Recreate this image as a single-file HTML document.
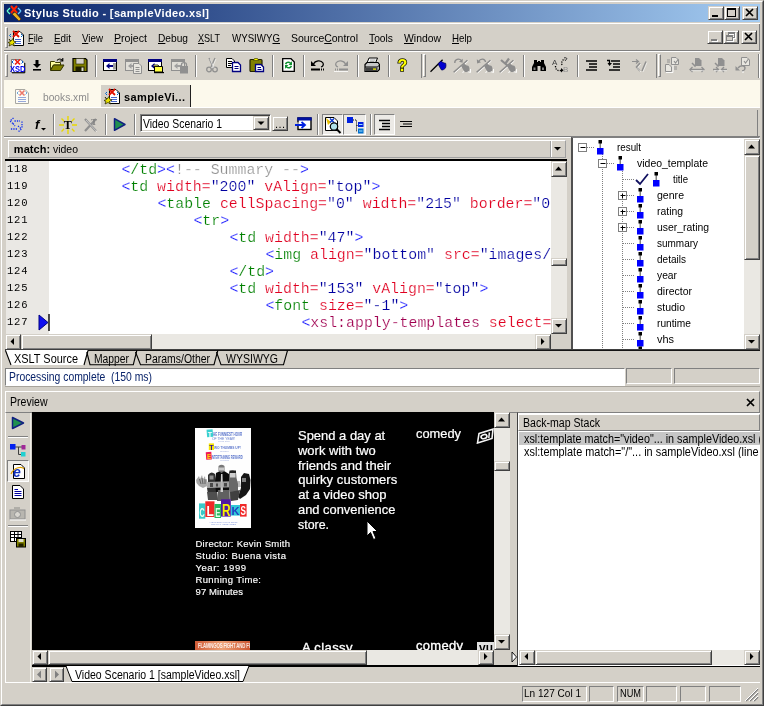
<!DOCTYPE html>
<html lang="en"><head><meta charset="utf-8"><title>Stylus Studio - [sampleVideo.xsl]</title>
<style>
html,body{margin:0;padding:0}
body{width:764px;height:706px;overflow:hidden;position:relative;background:#d4d0c8;font-family:"Liberation Sans",sans-serif;font-size:11px;color:#000}
div,svg{position:absolute;box-sizing:border-box}
#w{left:0;top:0;width:764px;height:706px;will-change:transform}
.t{white-space:pre}
.rs{border:1px solid;border-color:#fff #808080 #808080 #fff}
.sk{border:1px solid;border-color:#808080 #fff #fff #808080}
.bt{background:#d4d0c8;border:1px solid;border-color:#d4d0c8 #404040 #404040 #d4d0c8;box-shadow:inset 1px 1px 0 #fff,inset -1px -1px 0 #808080}
.tr{background:#eae8e3}
u{text-decoration:underline;text-underline-offset:1px}
.ed{overflow:hidden}
.cl{font:14.88px/17px "Liberation Mono",monospace;-webkit-text-stroke:.22px #fff;white-space:pre;height:17px}
.ln{left:1px;font:10.500px/17px "Liberation Mono",monospace;letter-spacing:.8px;white-space:pre;height:17px}
.b{color:#0000ff}.g{color:#008000}.r{color:#e00020}.v{color:#0000a0}.c{color:#909090}.m{color:#a00050}

</style></head>
<body>
<div id="w">
<div style="left:0px;top:0px;width:764px;height:706px;border:1px solid;border-color:#d4d0c8 #404040 #404040 #d4d0c8;"></div>
<div style="left:1px;top:1px;width:762px;height:704px;border:1px solid;border-color:#fff #808080 #808080 #fff;"></div>
<div style="left:4px;top:4px;width:756px;height:18px;background:linear-gradient(90deg,#0a246a,#a4ccf2);"></div>
<svg style="left:6px;top:5px;" width="16" height="16" viewBox="0 0 16 16"><path d="M1 6 L4 3 M1 6 L4 9" stroke="#6fc" stroke-width="1.3" fill="none"/><path d="M15 6 L12 3 M15 6 L12 9" stroke="#6cf" stroke-width="1.3" fill="none"/><path d="M5 1 L11 8 M11 1 L5 8" stroke="#f20" stroke-width="2"/><path d="M6 9 L9 7 L15 14 L13 16 Z" fill="#e8b020" stroke="#402000" stroke-width=".6"/></svg>
<div class="t" style="left:24px;top:5.69px;font-size:11px;line-height:14px;font-weight:700;color:#fff;letter-spacing:0.363px;">Stylus Studio - [sampleVideo.xsl]</div>
<div class="bt" style="left:708px;top:6px;width:16px;height:14px;"><svg width="14" height="12" viewBox="0 0 14 12" style="left:0;top:0"><rect x="3" y="8" width="6" height="2" fill="#000"/></svg></div>
<div class="bt" style="left:724px;top:6px;width:16px;height:14px;"><svg width="14" height="12" viewBox="0 0 14 12" style="left:0;top:0"><g><rect x="2.500" y="1.500" width="8" height="8" fill="none" stroke="#000"/><rect x="2" y="1" width="9" height="2" fill="#000"/></g></svg></div>
<div class="bt" style="left:742px;top:6px;width:16px;height:14px;"><svg width="14" height="12" viewBox="0 0 14 12" style="left:0;top:0"><path d="M3 2 L10 9 M10 2 L3 9" stroke="#000" stroke-width="1.700"/></svg></div>
<div style="left:4px;top:23px;width:756px;height:1px;background:#fff;"></div>
<div style="left:4px;top:50px;width:756px;height:1px;background:#808080;"></div>
<div style="left:759px;top:24px;width:1px;height:26px;background:#808080;"></div>
<div style="left:4px;top:51px;width:756px;height:1px;background:#fff;"></div>
<div style="left:5px;top:27px;width:3px;height:21px;border:1px solid;border-color:#fff #808080 #808080 #fff;"></div>
<svg style="left:8px;top:30px;" width="17" height="17" viewBox="0 0 17 17"><path d="M5.5 1.5 H12 L15.5 5 V15.5 H5.5 Z" fill="#fff" stroke="#000" stroke-width="1"/><path d="M7 9.5 H13 M7 11.5 H13 M7 13.5 H13" stroke="#4466cc" stroke-width="1"/><path d="M5 1 L11 7 M11 1 L5 7" stroke="#e01000" stroke-width="1.8"/><path d="M3 4 L1.5 5.5 L3 7" stroke="#06c" fill="none"/><path d="M13 4 L14.5 5.5 L13 7" stroke="#06c" fill="none"/><path d="M1 9 L3 11 L5 8.5 L6 11.5 L8 12 L5.5 13.5 L6.5 16 L4 14.5 L1 16 L2 13.5 L0 12.5 L2.5 11.5 Z" fill="#e8e000" stroke="#202000" stroke-width=".7"/></svg>
<div class="t" style="left:28px;top:31.19px;font-size:11px;line-height:14px;transform:scaleX(0.8462);transform-origin:0 0;"><u>F</u>ile</div>
<div class="t" style="left:54px;top:31.19px;font-size:11px;line-height:14px;transform:scaleX(0.8968);transform-origin:0 0;"><u>E</u>dit</div>
<div class="t" style="left:82px;top:31.19px;font-size:11px;line-height:14px;transform:scaleX(0.8881);transform-origin:0 0;"><u>V</u>iew</div>
<div class="t" style="left:114px;top:31.19px;font-size:11px;line-height:14px;transform:scaleX(0.9639);transform-origin:0 0;"><u>P</u>roject</div>
<div class="t" style="left:158px;top:31.19px;font-size:11px;line-height:14px;transform:scaleX(0.9255);transform-origin:0 0;"><u>D</u>ebug</div>
<div class="t" style="left:198px;top:31.19px;font-size:11px;line-height:14px;transform:scaleX(0.8241);transform-origin:0 0;"><u>X</u>SLT</div>
<div class="t" style="left:232px;top:31.19px;font-size:11px;line-height:14px;transform:scaleX(0.8825);transform-origin:0 0;">WYSIWY<u>G</u></div>
<div class="t" style="left:291px;top:31.19px;font-size:11px;line-height:14px;transform:scaleX(0.9528);transform-origin:0 0;">Source<u>C</u>ontrol</div>
<div class="t" style="left:369px;top:31.19px;font-size:11px;line-height:14px;transform:scaleX(0.9346);transform-origin:0 0;"><u>T</u>ools</div>
<div class="t" style="left:404px;top:31.19px;font-size:11px;line-height:14px;transform:scaleX(0.9457);transform-origin:0 0;"><u>W</u>indow</div>
<div class="t" style="left:452px;top:31.19px;font-size:11px;line-height:14px;transform:scaleX(0.8840);transform-origin:0 0;"><u>H</u>elp</div>
<div class="bt" style="left:707px;top:30px;width:16px;height:14px;"><svg width="14" height="12" viewBox="0 0 14 12" style="left:0;top:0"><rect x="3" y="8" width="6" height="2" fill="#fff" transform="translate(1,1)"/><rect x="3" y="8" width="6" height="2" fill="#808080"/></svg></div>
<div class="bt" style="left:723px;top:30px;width:16px;height:14px;"><svg width="14" height="12" viewBox="0 0 14 12" style="left:0;top:0"><g transform="translate(1,1)"><rect x="4.500" y="1.500" width="6" height="5" fill="none" stroke="#fff"/><rect x="4" y="1" width="7" height="2" fill="#fff"/><rect x="2.500" y="4.500" width="6" height="5" fill="#d4d0c8" stroke="#fff"/><rect x="2" y="4" width="7" height="2" fill="#fff"/></g><g><rect x="4.500" y="1.500" width="6" height="5" fill="none" stroke="#808080"/><rect x="4" y="1" width="7" height="2" fill="#808080"/><rect x="2.500" y="4.500" width="6" height="5" fill="#d4d0c8" stroke="#808080"/><rect x="2" y="4" width="7" height="2" fill="#808080"/></g></svg></div>
<div class="bt" style="left:741px;top:30px;width:16px;height:14px;"><svg width="14" height="12" viewBox="0 0 14 12" style="left:0;top:0"><path d="M3 2 L10 9 M10 2 L3 9" stroke="#000" stroke-width="1.700"/></svg></div>
<div style="left:5px;top:54px;width:3px;height:23px;border:1px solid;border-color:#fff #808080 #808080 #fff;"></div>
<svg style="left:10px;top:58px;" width="16" height="16" viewBox="0 0 16 16"><path d="M1.500 1.500 H11 L14.500 5 V14.500 H1.500 Z" fill="#fff" stroke="#606060" stroke-width=".8"/><path d="M14.800 5 V14.800 H2" fill="none" stroke="#000" stroke-width="1"/>
<path d="M5 1.500 L10 6.500 M10 1.500 L5 6.500" stroke="#f02010" stroke-width="1.700"/>
<path d="M3.500 2.500 L2 4 L3.500 5.500" stroke="#0060d0" fill="none"/><path d="M11.500 2.500 L13 4 L11.500 5.500" stroke="#0060d0" fill="none"/>
<text x="0" y="13.500" font-family="Liberation Sans,sans-serif" font-weight="700" font-size="8.500" fill="#0000f0" textLength="15.500" lengthAdjust="spacingAndGlyphs">XSD</text></svg>
<svg style="left:32px;top:58px;" width="10" height="16" viewBox="0 0 10 16"><path d="M3.5 2 H6.5 V6 H9 L5 10 L1 6 H3.5 Z" fill="#000"/><rect x="1" y="11" width="8" height="1.6" fill="#000"/></svg>
<svg style="left:49px;top:57px;" width="16" height="16" viewBox="0 0 16 16"><path d="M1.5 4.5 H5.5 L6.5 5.5 H11.5 V8 H4.5 L1.5 13 Z" fill="#ffffa0" stroke="#404000" stroke-width="1"/>
<path d="M4.5 8 H15 L11.5 13.5 H1.5 Z" fill="#808000" stroke="#303000" stroke-width="1"/>
<path d="M8 3.5 C9.5 1.5 12 1.5 13.5 3.5 M13.8 1 V4 H10.8" fill="none" stroke="#000" stroke-width="1.1"/></svg>
<svg style="left:72px;top:57px;" width="16" height="16" viewBox="0 0 16 16"><path d="M1 1.5 H13.5 L15 3 V14.5 H1 Z" fill="#808000" stroke="#000" stroke-width="1.2"/><rect x="4" y="1.5" width="8" height="5.5" fill="#d4d0c8" stroke="#202000" stroke-width=".6"/><rect x="3.5" y="9.5" width="9" height="5" fill="#202000"/><rect x="9.5" y="10.5" width="2" height="3.5" fill="#e0e0d0"/></svg>
<div style="left:95px;top:55px;width:1px;height:22px;background:#808080;"></div>
<div style="left:96px;top:55px;width:1px;height:22px;background:#fff;"></div>
<svg style="left:102px;top:58px;" width="16" height="16" viewBox="0 0 16 16"><rect x="1.5" y="1.5" width="13" height="11" fill="#fff" stroke="#000"/><rect x="1" y="1" width="14" height="3" fill="#000080"/><path d="M4 8 L7.5 5 V7 H11.5 V9 H7.5 V11 Z" fill="#000080"/><rect x="11" y="5" width="3" height="6.5" fill="#a0a0a0"/></svg>
<svg style="left:125px;top:58px;" width="18" height="17" viewBox="0 0 18 17"><rect x="0.5" y="1.5" width="13" height="11" fill="#e0ded8" stroke="#909090"/><rect x="0" y="1" width="14" height="3" fill="#909090"/><path d="M3 8 L6.5 5 V7 H10.5 V9 H6.5 V11 Z" fill="#a0a0a0"/><path d="M8.5 5.5 H14 L16.5 8 V15.500 H8.5 Z" fill="#e8e6e0" stroke="#909090"/><path d="M10.500 9.500 H14.500 M10.500 11.500 H14.500 M10.500 13.500 H14.500" stroke="#909090"/></svg>
<svg style="left:147px;top:58px;" width="18" height="17" viewBox="0 0 18 17"><rect x="1.5" y="1.5" width="13" height="11" fill="#fff" stroke="#000"/><rect x="1" y="1" width="14" height="3" fill="#000080"/><path d="M4 8 L7.5 5 V7 H11.5 V9 H7.5 V11 Z" fill="#000080"/><path d="M7.500 8.500 H15.500 V14 H7.500 Z" fill="#ffff40" stroke="#000"/><path d="M6.500 7 H11 L12 8.500 H7" fill="#ffff80" stroke="#000" stroke-width=".8"/><rect x="7" y="14" width="10" height="1.2" fill="#000"/></svg>
<svg style="left:171px;top:58px;" width="18" height="17" viewBox="0 0 18 17"><rect x="0.5" y="1.5" width="13" height="11" fill="#e0ded8" stroke="#909090"/><rect x="0" y="1" width="14" height="3" fill="#909090"/><path d="M3 8 L6.5 5 V7 H10.5 V9 H6.5 V11 Z" fill="#a0a0a0"/><rect x="9" y="8" width="8" height="7.500" fill="#909090"/><path d="M10.500 8 V6.500 C10.500 4 15.500 4 15.500 6.500 V8" fill="none" stroke="#909090" stroke-width="1.3"/></svg>
<div style="left:195px;top:55px;width:1px;height:22px;background:#808080;"></div>
<div style="left:196px;top:55px;width:1px;height:22px;background:#fff;"></div>
<svg style="left:204px;top:57px;" width="16" height="16" viewBox="0 0 16 16"><path d="M5 1 L9 10 M11 1 L7 10" stroke="#909090" stroke-width="1.3" fill="none"/><circle cx="5" cy="12.500" r="2.300" fill="none" stroke="#909090" stroke-width="1.300"/><circle cx="11" cy="12.500" r="2.300" fill="none" stroke="#909090" stroke-width="1.300"/><path d="M6 2 L10 11 M12 2 L8 11" stroke="#fff" stroke-width=".7" fill="none" opacity=".8"/></svg>
<svg style="left:226px;top:58px;" width="16" height="16" viewBox="0 0 16 16"><path d="M.5 .5 H6 L8.500 3 V9.500 H.5 Z" fill="#fff" stroke="#000"/><path d="M2 3.500 H6 M2 5.500 H6 M2 7.500 H5" stroke="#000"/><path d="M6.500 4.500 H12 L14.500 7 V13.500 H6.500 Z" fill="#fff" stroke="#000080" stroke-width="1.300"/><path d="M8.500 8.500 H12.500 M8.500 10.500 H12.500" stroke="#000080"/></svg>
<svg style="left:249px;top:57px;" width="16" height="16" viewBox="0 0 16 16"><rect x="1" y="2.500" width="12" height="12" rx="1" fill="#808000" stroke="#202000" stroke-width="1.200"/><path d="M4.500 3.500 L5.500 1.500 H8.500 L9.500 3.500 Z" fill="#ffff00" stroke="#404000" stroke-width=".7"/><path d="M6.500 7.500 H12 L14.500 10 V14.500 H6.500 Z" fill="#fff" stroke="#000080" stroke-width="1.300"/><path d="M8.500 10.500 H12 M8.500 12.500 H12.500" stroke="#000080"/></svg>
<div style="left:272px;top:55px;width:1px;height:22px;background:#808080;"></div>
<div style="left:273px;top:55px;width:1px;height:22px;background:#fff;"></div>
<svg style="left:282px;top:58px;" width="14" height="15" viewBox="0 0 14 15"><path d="M.7 .7 H9 L12.300 4 V13.300 H.7 Z" fill="#fff" stroke="#000" stroke-width="1.300"/><path d="M3 6 C3 3.500 7 2.500 9 4.500 L10 3 V7 H6.500 L8 5.500 C6.500 4.500 4.500 5 4.500 6.500 Z" fill="#109030"/><path d="M10 8 C10 10.500 6 11.500 4 9.500 L3 11 V7 H6.500 L5 8.500 C6.500 9.500 8.500 9 8.500 7.500 Z" fill="#109030"/></svg>
<div style="left:303px;top:55px;width:1px;height:22px;background:#808080;"></div>
<div style="left:304px;top:55px;width:1px;height:22px;background:#fff;"></div>
<svg style="left:310px;top:58px;" width="16" height="16" viewBox="0 0 16 16"><g><path d="M3.500 6 C5 2.500 11 1.500 13 5 C14 7 12.500 8.500 11 9" fill="none" stroke="#000" stroke-width="1.300"/><path d="M1 3 V8 H6 Z" fill="#000"/><rect x="1" y="10.500" width="9" height="2" fill="#000"/><path d="M11 11.500 H15" stroke="#000" stroke-dasharray="1 1" stroke-width="2"/></g></svg>
<svg style="left:333px;top:58px;" width="16" height="16" viewBox="0 0 16 16"><g transform="translate(16,0) scale(-1,1)"><path d="M3.500 6 C5 2.500 11 1.500 13 5 C14 7 12.500 8.500 11 9" fill="none" stroke="#909090" stroke-width="1.300"/><path d="M1 3 V8 H6 Z" fill="#909090"/><rect x="1" y="10.500" width="9" height="2" fill="#909090"/><path d="M11 11.500 H15" stroke="#909090" stroke-dasharray="1 1" stroke-width="2"/></g><path d="M1 13.500 H15" stroke="#fff" opacity=".8"/></svg>
<div style="left:357px;top:55px;width:1px;height:22px;background:#808080;"></div>
<div style="left:358px;top:55px;width:1px;height:22px;background:#fff;"></div>
<svg style="left:364px;top:57px;" width="16" height="16" viewBox="0 0 16 16"><path d="M5 1 H13.500 L11.500 6 H3 Z" fill="#fff" stroke="#000"/><path d="M6 3 H11.500 M5.500 4.500 H10.500" stroke="#808080" stroke-width=".7"/><path d="M1 7.500 L3 5.500 H14 L15.500 7.500 V12.500 L13.500 14.500 H1 Z" fill="#c8c8c8" stroke="#000" stroke-width="1.200"/><path d="M1 10 H13.500 M13.500 10 L15.500 8" stroke="#000"/><rect x="1.500" y="10.500" width="12" height="3.500" fill="#404040"/><rect x="9" y="11.500" width="3" height="1.200" fill="#ffff00"/></svg>
<div style="left:388px;top:55px;width:1px;height:22px;background:#808080;"></div>
<div style="left:389px;top:55px;width:1px;height:22px;background:#fff;"></div>
<svg style="left:396px;top:57px;" width="13" height="17" viewBox="0 0 13 17"><text x="1.500" y="14" font-family="Liberation Sans,sans-serif" font-weight="700" font-size="16" fill="#ffff00" stroke="#202000" stroke-width="1.600" paint-order="stroke">?</text></svg>
<div style="left:421px;top:54px;width:1px;height:24px;background:#808080;"></div>
<div style="left:423px;top:54px;width:3px;height:23px;border:1px solid;border-color:#fff #808080 #808080 #fff;"></div>
<svg style="left:430px;top:57px;" width="17" height="17" viewBox="0 0 17 17"><path d="M0.500 14.700 L12.600 2.700" stroke="#000" stroke-width="1.300"/><path d="M8 6.800 L11 4 C12 5.200 14 6.200 15.600 6.200 C16.200 8 16 10 15.300 11.200 C14 12.500 12.800 13.200 11.500 13 C10.300 11 9 9 8 6.800 Z" fill="#0000d0" stroke="#000050" stroke-width=".7"/></svg>
<svg style="left:453px;top:57px;" width="18" height="17" viewBox="0 0 18 17"><path d="M1.600 16 L15.400 4" stroke="#fff" stroke-width="1" opacity=".9"/><path d="M0.600 15.200 L14.400 3.200" stroke="#8c8c8c" stroke-width="1.400"/><path d="M9.500 16 L12 13 L14 14.500 L16 15 L17.500 15.500 L17.500 12" fill="none" stroke="#fff" stroke-width="1" opacity=".9"/><path d="M8.300 9.300 L11 6.500 C12 7.500 13.500 8.500 15.300 8.800 C16.500 10 16.800 12 16.300 13.500 C15 14.800 13.500 15.300 12 15 C10.500 13.500 9.300 11.500 8.300 9.300 Z" fill="#8c8c8c"/><path d="M1.800 6 C1.500 2.500 6 .8 8.500 3.600" fill="none" stroke="#8c8c8c" stroke-width="1.300"/><path d="M9.800 1.800 L9.600 5.800 L6 4.800 Z" fill="#8c8c8c"/></svg>
<svg style="left:476px;top:57px;" width="18" height="17" viewBox="0 0 18 17"><path d="M1.600 16 L15.400 4" stroke="#fff" stroke-width="1" opacity=".9"/><path d="M0.600 15.200 L14.400 3.200" stroke="#8c8c8c" stroke-width="1.400"/><path d="M9.500 16 L12 13 L14 14.500 L16 15 L17.500 15.500 L17.500 12" fill="none" stroke="#fff" stroke-width="1" opacity=".9"/><path d="M8.300 9.300 L11 6.500 C12 7.500 13.500 8.500 15.300 8.800 C16.500 10 16.800 12 16.300 13.500 C15 14.800 13.500 15.300 12 15 C10.500 13.500 9.300 11.500 8.300 9.300 Z" fill="#8c8c8c"/><path d="M2.500 4.800 C4.500 1 9 1.500 9.500 5" fill="none" stroke="#8c8c8c" stroke-width="1.300"/><path d="M.8 2.300 L1.200 6.500 L5 5.200 Z" fill="#8c8c8c"/></svg>
<svg style="left:499px;top:57px;" width="18" height="17" viewBox="0 0 18 17"><path d="M1.600 16 L15.400 4" stroke="#fff" stroke-width="1" opacity=".9"/><path d="M0.600 15.200 L14.400 3.200" stroke="#8c8c8c" stroke-width="1.400"/><path d="M9.500 16 L12 13 L14 14.500 L16 15 L17.500 15.500 L17.500 12" fill="none" stroke="#fff" stroke-width="1" opacity=".9"/><path d="M8.300 9.300 L11 6.500 C12 7.500 13.500 8.500 15.300 8.800 C16.500 10 16.800 12 16.300 13.500 C15 14.800 13.500 15.300 12 15 C10.500 13.500 9.300 11.500 8.300 9.300 Z" fill="#8c8c8c"/><path d="M2 3 L9 9 M10 1.500 L6 7" stroke="#8c8c8c" stroke-width="2.200"/></svg>
<div style="left:523px;top:55px;width:1px;height:22px;background:#808080;"></div>
<div style="left:524px;top:55px;width:1px;height:22px;background:#fff;"></div>
<svg style="left:531px;top:58px;" width="16" height="16" viewBox="0 0 16 16"><path d="M3 2 H6 V4 H7 V3 H9 V4 H10 V2 H13 V5 L15 9 V13 H9.500 V8 H6.500 V13 H1 V9 L3 5 Z" fill="#000"/><rect x="2.500" y="9.500" width="2" height="2.500" fill="#808080"/><rect x="11" y="9.500" width="2" height="2.500" fill="#808080"/></svg>
<svg style="left:552px;top:57px;" width="18" height="17" viewBox="0 0 18 17"><text x="0" y="7.500" font-family="Liberation Sans,sans-serif" font-size="8" fill="#404040">A</text><text x="11" y="15" font-family="Liberation Sans,sans-serif" font-size="8" fill="#909090">B</text><path d="M3.500 9 C3.500 13 6 14 9 13.500" fill="none" stroke="#000" stroke-dasharray="1.200 1.200" stroke-width="1.300"/><path d="M9 11 L11.500 13.300 L9 15.500 Z" fill="#000"/><path d="M10 8 C9 5 10.500 2.500 13 2" fill="none" stroke="#000" stroke-dasharray="1.200 1.200" stroke-width="1.300"/><path d="M12 0 L15 1.500 L13 4" fill="none" stroke="#404040"/></svg>
<div style="left:577px;top:55px;width:1px;height:22px;background:#808080;"></div>
<div style="left:578px;top:55px;width:1px;height:22px;background:#fff;"></div>
<svg style="left:586px;top:59px;" width="12" height="13" viewBox="0 0 12 13"><path d="M0 2 H11 M3 5 H11 M3 8 H11 M0 11 H11" stroke="#000" stroke-width="1.400"/></svg>
<svg style="left:606px;top:59px;" width="15" height="13" viewBox="0 0 15 13"><path d="M5 2 H14 M7 5 H14 M7 8 H14 M3 11 H14" stroke="#000" stroke-width="1.400"/><path d="M1 1.500 H3.500 V5.500" fill="none" stroke="#000" stroke-width="1.300"/><path d="M1.500 4 L3.500 7 L6 4 Z" fill="#000"/></svg>
<svg style="left:631px;top:58px;" width="17" height="16" viewBox="0 0 17 16"><path d="M1 3.500 H7 M5 1.500 L7.500 3.500 L5 5.500" fill="none" stroke="#909090" stroke-width="1.200"/><path d="M9 5 L5.500 9 L9 13" fill="none" stroke="#909090" stroke-width="1.500"/><path d="M15 3.500 L11 13" stroke="#909090" stroke-width="1.500"/><path d="M10 6 L6.500 10 L10 14 M16 4.500 L12 14" stroke="#fff" stroke-width=".7" fill="none" opacity=".8"/></svg>
<div style="left:656px;top:54px;width:1px;height:24px;background:#808080;"></div>
<div style="left:658px;top:54px;width:3px;height:23px;border:1px solid;border-color:#fff #808080 #808080 #fff;"></div>
<svg style="left:665px;top:57px;" width="17" height="17" viewBox="0 0 17 17"><path d="M6.5 0.5 H11 L13.5 3 V7.5 H6.5 Z" fill="#e8e6e0" stroke="#909090"/><path d="M0.5 7.5 H4 L6.5 10 V14.5 H0.5 Z" fill="#e8e6e0" stroke="#909090"/><path d="M2 3 H5 M2 5 H5 M9 10 H12 M9 12 H12" stroke="#909090"/><path d="M9 4 L10.500 6 L13.500 2" fill="none" stroke="#909090" stroke-width="1.200"/><path d="M1 15.500 H8 M8 8 V15.500" stroke="#fff" opacity=".9"/></svg>
<svg style="left:689px;top:57px;" width="17" height="17" viewBox="0 0 17 17"><path d="M6 1 H10 L12.500 3.500 V9 H6 Z" fill="#909090"/><path d="M3 6 L6 9 L10 3" fill="none" stroke="#909090" stroke-width="1.500"/><path d="M1 12.500 H15 M3.500 10 L1 12.500 L3.500 15 M12.500 10 L15 12.500 L12.500 15" fill="none" stroke="#909090" stroke-width="1.300"/><path d="M2 13.700 H15" stroke="#fff" opacity=".8" stroke-width=".7"/></svg>
<svg style="left:712px;top:57px;" width="17" height="17" viewBox="0 0 17 17"><path d="M6 1 H10 L12.500 3.500 V9 H6 Z" fill="#909090"/><path d="M3 6 L6 9 L10 3" fill="none" stroke="#909090" stroke-width="1.500"/><path d="M1 12.500 H6.500 M9.500 12.500 H15 M4 10 L6.500 12.500 L4 15 M12 10 L9.500 12.500 L12 15" fill="none" stroke="#909090" stroke-width="1.300"/><path d="M2 13.700 H15" stroke="#fff" opacity=".8" stroke-width=".7"/></svg>
<svg style="left:735px;top:57px;" width="17" height="17" viewBox="0 0 17 17"><path d="M6.5 0.5 H12 L14.5 3 V8.5 H6.5 Z" fill="#e8e6e0" stroke="#909090"/><path d="M9 4 L10.500 6 L13.500 2" fill="none" stroke="#909090" stroke-width="1.200"/><path d="M3 11 C5 8 10 8 10 11 C10 13 8 14 7 14" fill="none" stroke="#909090" stroke-width="1.400"/><path d="M.5 9 V13.500 H5 Z" fill="#909090"/><path d="M7 15 H9" stroke="#fff"/></svg>
<div style="left:758px;top:54px;width:1px;height:24px;background:#808080;"></div>
<div style="left:759px;top:54px;width:1px;height:24px;background:#fff;"></div>
<div style="left:4px;top:80px;width:756px;height:27px;background:#fcf9ec;"></div>
<div style="left:4px;top:107px;width:756px;height:1px;background:#fff;"></div>
<div style="left:101px;top:85px;width:90px;height:22px;background:#d4d0c8;border-right:1px solid #202020;"></div>
<svg style="left:14px;top:88px;" width="17" height="17" viewBox="0 0 17 17"><g opacity=".55"><path d="M1.5 1.5 H11 L14.5 5 V15.5 H1.5 Z" fill="#fff" stroke="#666" stroke-width="1"/><path d="M4 9.5 H12 M4 11.5 H12 M4 13.5 H12" stroke="#4466cc" stroke-width="1"/><path d="M5.5 2.5 L10.5 7.5 M10.5 2.5 L5.5 7.5" stroke="#e01000" stroke-width="1.6"/><path d="M4.5 3.5 L3 5 L4.5 6.5" stroke="#06c" fill="none"/><path d="M11.5 3.5 L13 5 L11.5 6.5" stroke="#06c" fill="none"/></g></svg>
<div class="t" style="left:43px;top:90.19px;font-size:11px;line-height:14px;color:#8c8c8c;transform:scaleX(0.9290);transform-origin:0 0;">books.xml</div>
<svg style="left:104px;top:88px;" width="17" height="17" viewBox="0 0 17 17"><path d="M5.5 1.5 H12 L15.5 5 V15.5 H5.5 Z" fill="#fff" stroke="#000" stroke-width="1"/><path d="M7 9.5 H13 M7 11.5 H13 M7 13.5 H13" stroke="#4466cc" stroke-width="1"/><path d="M5 1 L11 7 M11 1 L5 7" stroke="#e01000" stroke-width="1.8"/><path d="M3 4 L1.5 5.5 L3 7" stroke="#06c" fill="none"/><path d="M13 4 L14.5 5.5 L13 7" stroke="#06c" fill="none"/><path d="M1 9 L3 11 L5 8.5 L6 11.5 L8 12 L5.5 13.5 L6.5 16 L4 14.5 L1 16 L2 13.5 L0 12.5 L2.5 11.5 Z" fill="#e8e000" stroke="#202000" stroke-width=".7"/></svg>
<div class="t" style="left:124px;top:90.19px;font-size:11px;line-height:14px;font-weight:700;letter-spacing:0.373px;">sampleVi...</div>
<svg style="left:9px;top:117px;" width="16" height="16" viewBox="0 0 16 16"><g fill="none" stroke="#1030f0" stroke-width="1.300" stroke-dasharray="1.300 1.100"><path d="M4.500 1 L1 4 L4.500 7"/><path d="M5.500 4 H11"/><path d="M13 4.500 V10.500"/><path d="M9 9 L12.500 12 L9 15"/><path d="M8 12 H1.500"/><path d="M4 6.500 L6 9"/></g></svg>
<svg style="left:34px;top:117px;" width="14" height="16" viewBox="0 0 14 16"><text x="1" y="12" font-family="Liberation Sans,sans-serif" font-style="italic" font-weight="700" font-size="13" fill="#000">f</text><path d="M7 11 H12 L9.500 13.500 Z" fill="#000"/></svg>
<div style="left:53px;top:114px;width:1px;height:21px;background:#808080;"></div>
<div style="left:54px;top:114px;width:1px;height:21px;background:#fff;"></div>
<svg style="left:59px;top:116px;" width="18" height="18" viewBox="0 0 18 18"><path d="M9 0 V18 M0 9 H18 M2.500 2.500 L15.500 15.500 M15.500 2.500 L2.500 15.500" stroke="#e8d800" stroke-width="1.400"/><rect x="5" y="4.500" width="8" height="9" fill="#d4d0c8"/><text x="4.800" y="13" font-family="Liberation Serif,serif" font-weight="700" font-size="12" fill="#000">T</text></svg>
<svg style="left:83px;top:116px;" width="17" height="18" viewBox="0 0 17 18"><path d="M2 3 L13 15 M13 3 L2 15" stroke="#909090" stroke-width="2.200"/><text x="8" y="9" font-family="Liberation Serif,serif" font-weight="700" font-size="9" fill="#808080">T</text><path d="M3 4 L14 16" stroke="#fff" stroke-width=".7" opacity=".7"/></svg>
<div style="left:105px;top:114px;width:1px;height:21px;background:#808080;"></div>
<div style="left:106px;top:114px;width:1px;height:21px;background:#fff;"></div>
<svg style="left:113px;top:117px;" width="14" height="15" viewBox="0 0 14 15"><path d="M1.500 1.700 L12 7.500 L1.500 13.300 Z" fill="#209050" stroke="#102080" stroke-width="1.500" stroke-linejoin="round"/></svg>
<div style="left:134px;top:114px;width:1px;height:21px;background:#808080;"></div>
<div style="left:135px;top:114px;width:1px;height:21px;background:#fff;"></div>
<div style="left:140px;top:114px;width:131px;height:18px;background:#fff;border:1px solid;border-color:#808080 #fff #fff #808080;box-shadow:inset 1px 1px 0 #404040,inset -1px -1px 0 #d4d0c8;"></div>
<div class="t" style="left:143px;top:115.67px;font-size:12.5px;line-height:16px;transform:scaleX(0.8317);transform-origin:0 0;">Video Scenario 1</div>
<div class="bt" style="left:253px;top:116px;width:16px;height:14px;"><svg width="14" height="12" viewBox="0 0 14 12" style="left:0;top:0"><path d="M3.500 4.500 H10.500 L7 8 Z" fill="#000"/></svg></div>
<div class="bt" style="left:272px;top:116px;width:16px;height:15px;"><div class="t" style="left:2px;top:1px;font-size:11px;line-height:12px;letter-spacing:.5px">...</div></div>
<svg style="left:295px;top:117px;" width="17" height="15" viewBox="0 0 17 15"><rect x="3" y="1" width="13" height="11.500" fill="#fff" stroke="#000" stroke-width="1.400"/><rect x="2.300" y=".3" width="14.400" height="3.200" fill="#0010a0"/><path d="M0 8 H9 M6.500 5 L10 8 L6.500 11" fill="none" stroke="#0020e0" stroke-width="1.800"/><rect x="0" y="5.500" width="4" height="1.200" fill="#d4d0c8"/></svg>
<div style="left:317px;top:114px;width:1px;height:21px;background:#808080;"></div>
<div style="left:318px;top:114px;width:1px;height:21px;background:#fff;"></div>
<div style="left:322px;top:114px;width:21px;height:21px;background:#eceae6;border:1px solid;border-color:#808080 #fff #fff #808080;"></div>
<div style="left:343px;top:114px;width:23px;height:21px;background:#eceae6;border:1px solid;border-color:#808080 #fff #fff #808080;"></div>
<div style="left:374px;top:114px;width:21px;height:21px;background:#eceae6;border:1px solid;border-color:#808080 #fff #fff #808080;"></div>
<svg style="left:325px;top:117px;" width="17" height="17" viewBox="0 0 17 17"><path d="M.5 .5 H9 L12.500 4 V13.500 H.5 Z" fill="#fff" stroke="#000"/><path d="M1 1 L6 5 L3 8 Z" fill="#e8c000"/><path d="M5 1.500 L9 5.500 M9 1.500 L5 5.500" stroke="#0030d0" stroke-width="1.300"/><circle cx="9" cy="9.500" r="3.700" fill="#b0e0e8" stroke="#000" stroke-width="1.200"/><path d="M11.500 12 L15.500 16" stroke="#000" stroke-width="2"/></svg>
<svg style="left:347px;top:117px;" width="17" height="17" viewBox="0 0 17 17"><rect x="0" y="0" width="6" height="6" fill="#0020e0"/><path d="M6 3 H9.500 V14 H12 M9.500 8.500 H12" fill="none" stroke="#000" stroke-dasharray="1 1"/><rect x="11" y="5" width="5.500" height="5" fill="#0020e0"/><rect x="11" y="11.500" width="5.500" height="5" fill="#0070d0"/><path d="M12 7.500 H15.500 M12 14 H15.500" stroke="#a0e0ff"/></svg>
<div style="left:370px;top:114px;width:1px;height:21px;background:#808080;"></div>
<div style="left:371px;top:114px;width:1px;height:21px;background:#fff;"></div>
<svg style="left:379px;top:119px;" width="12" height="12" viewBox="0 0 12 12"><path d="M0 1.500 H11 M3 4.500 H11 M3 7.500 H11 M0 10.500 H11" stroke="#000" stroke-width="1.500"/></svg>
<svg style="left:400px;top:120px;" width="13" height="8" viewBox="0 0 13 8"><path d="M0 1.500 H12 M3 4 H12 M0 6.500 H12" stroke="#000" stroke-width="1.200"/></svg>
<div style="left:757px;top:110px;width:1px;height:27px;background:#808080;"></div>
<div style="left:4px;top:136px;width:756px;height:1px;background:#808080;"></div>
<div style="left:4px;top:137px;width:756px;height:1px;background:#fff;"></div>
<div class="rs" style="left:8px;top:140px;width:558px;height:18px;border-color:#fff #a0a0a0 #a0a0a0 #fff;"></div>
<div class="t" style="left:13.8px;top:141.69px;font-size:11px;line-height:14px;font-weight:700;letter-spacing:0.067px;">match:</div>
<div class="t" style="left:53px;top:141.69px;font-size:11px;line-height:14px;transform:scaleX(0.9507);transform-origin:0 0;">video</div>
<div style="left:550px;top:141px;width:1px;height:16px;background:#a0a0a0;"></div>
<div style="left:551px;top:141px;width:1px;height:16px;background:#fff;"></div>
<svg style="left:554px;top:147px;" width="8" height="5" viewBox="0 0 8 5"><path d="M0 0 H7 L3.500 3.500 Z" fill="#000"/></svg>
<div style="left:5px;top:159px;width:562px;height:2px;background:#000;"></div>
<div style="left:6px;top:161px;width:545px;height:173px;background:#fff;"></div>
<div style="left:6px;top:161px;width:43px;height:173px;background:#eae8e4;"></div>
<div class="ed" style="left:6px;top:161px;width:545px;height:173px"><div class="cl" style="top:1px;left:115.4px"><span class="b">&lt;</span><span class="g">/td</span><span class="b">&gt;&lt;</span><span class="c">!-- Summary --</span><span class="b">&gt;</span></div><div class="ln" style="top:0px">118</div><div class="cl" style="top:18px;left:115.4px"><span class="b">&lt;</span><span class="g">td</span><span class="r"> width=</span><span class="v">&quot;200&quot;</span><span class="r"> vAlign=</span><span class="v">&quot;top&quot;</span><span class="b">&gt;</span></div><div class="ln" style="top:17px">119</div><div class="cl" style="top:35px;left:151.4px"><span class="b">&lt;</span><span class="g">table</span><span class="r"> cellSpacing=</span><span class="v">&quot;0&quot;</span><span class="r"> width=</span><span class="v">&quot;215&quot;</span><span class="r"> border=</span><span class="v">&quot;0</span></div><div class="ln" style="top:34px">120</div><div class="cl" style="top:52px;left:187.4px"><span class="b">&lt;</span><span class="g">tr</span><span class="b">&gt;</span></div><div class="ln" style="top:51px">121</div><div class="cl" style="top:69px;left:223.4px"><span class="b">&lt;</span><span class="g">td</span><span class="r"> width=</span><span class="v">&quot;47&quot;</span><span class="b">&gt;</span></div><div class="ln" style="top:68px">122</div><div class="cl" style="top:86px;left:259.4px"><span class="b">&lt;</span><span class="g">img</span><span class="r"> align=</span><span class="v">&quot;bottom&quot;</span><span class="r"> src=</span><span class="v">&quot;images/</span></div><div class="ln" style="top:85px">123</div><div class="cl" style="top:103px;left:223.4px"><span class="b">&lt;</span><span class="g">/td</span><span class="b">&gt;</span></div><div class="ln" style="top:102px">124</div><div class="cl" style="top:120px;left:223.4px"><span class="b">&lt;</span><span class="g">td</span><span class="r"> width=</span><span class="v">&quot;153&quot;</span><span class="r"> vAlign=</span><span class="v">&quot;top&quot;</span><span class="b">&gt;</span></div><div class="ln" style="top:119px">125</div><div class="cl" style="top:137px;left:259.4px"><span class="b">&lt;</span><span class="g">font</span><span class="r"> size=</span><span class="v">&quot;-1&quot;</span><span class="b">&gt;</span></div><div class="ln" style="top:136px">126</div><div class="cl" style="top:154px;left:295.4px"><span class="b">&lt;</span><span class="m">xsl:apply-templates</span><span class="r"> select=</span></div><div class="ln" style="top:153px">127</div></div>
<svg style="left:38px;top:314px;" width="12" height="17" viewBox="0 0 12 17"><path d="M1 1 L10 8.5 L1 16 Z" fill="#1010f0" stroke="#000080" stroke-width="1"/><path d="M11 0 V17" stroke="#000" stroke-width="1.4"/></svg>
<div class="tr" style="left:551px;top:161px;width:16px;height:173px;"></div>
<div class="bt" style="left:551px;top:161px;width:16px;height:16px;"><svg width="13" height="13" viewBox="0 0 13 13" style="left:0;top:0px"><path d="M3 8.5 L6.5 4.5 L10 8.5 Z" fill="#000"/></svg></div>
<div class="bt" style="left:551px;top:318px;width:16px;height:16px;"><svg width="13" height="13" viewBox="0 0 13 13" style="left:0;top:0px"><path d="M3 5 L10 5 L6.5 8.5 Z" fill="#000"/></svg></div>
<div class="bt" style="left:551px;top:258px;width:16px;height:8px;"></div>
<div class="tr" style="left:5px;top:334px;width:546px;height:16px;"></div>
<div class="bt" style="left:5px;top:334px;width:16px;height:16px;"><svg width="13" height="13" viewBox="0 0 13 13" style="left:0;top:0px"><path d="M8 3 L8 10 L4.5 6.5 Z" fill="#000"/></svg></div>
<div class="bt" style="left:535px;top:334px;width:16px;height:16px;"><svg width="13" height="13" viewBox="0 0 13 13" style="left:0;top:0px"><path d="M5 3 L5 10 L8.5 6.5 Z" fill="#000"/></svg></div>
<div class="bt" style="left:21px;top:334px;width:131px;height:16px;"></div>
<div style="left:571px;top:137px;width:189px;height:213px;background:#fff;border:1px solid;border-color:#808080 #fff #000 #404040;border-left:2px solid #505050;"></div>
<svg style="left:573px;top:138px;" width="172" height="211" viewBox="0 0 172 211"><path d="M29.5 16 V21 M29.5 31 V211" stroke="#808080" stroke-dasharray="1 1"/><path d="M49.5 33 V211" stroke="#808080" stroke-dasharray="1 1"/><path d="M14 9.5 H21" stroke="#808080" stroke-dasharray="1 1"/><rect x="5.5" y="5.5" width="8" height="8" fill="#fff" stroke="#808080"/><path d="M7.5 9.5 H12.5" stroke="#000"/><rect x="26.5" y="4" width="1.500" height="7" fill="#808080"/><rect x="25.5" y="2" width="3.500" height="3.500" fill="#000"/><rect x="24" y="10" width="6.500" height="6.500" fill="#0000ff"/><path d="M34 25.5 H41" stroke="#808080" stroke-dasharray="1 1"/><rect x="25.5" y="21.5" width="8" height="8" fill="#fff" stroke="#808080"/><path d="M27.5 25.5 H32.5" stroke="#000"/><rect x="46.5" y="20" width="1.500" height="7" fill="#808080"/><rect x="45.5" y="18" width="3.500" height="3.500" fill="#000"/><rect x="44" y="26" width="6.500" height="6.500" fill="#0000ff"/><path d="M50 41.5 H61" stroke="#808080" stroke-dasharray="1 1"/><path d="M63 42 L67 46 L75 36" fill="none" stroke="#101060" stroke-width="1.800"/><rect x="82.5" y="36" width="1.500" height="7" fill="#808080"/><rect x="81.5" y="34" width="3.500" height="3.500" fill="#000"/><rect x="80" y="42" width="6.500" height="6.500" fill="#0000ff"/><path d="M54 57.5 H61" stroke="#808080" stroke-dasharray="1 1"/><rect x="45.5" y="53.5" width="8" height="8" fill="#fff" stroke="#808080"/><path d="M47.5 57.5 H52.5" stroke="#000"/><path d="M49.5 55.5 V60.5" stroke="#000"/><rect x="66.5" y="52" width="1.500" height="7" fill="#808080"/><rect x="65.5" y="50" width="3.500" height="3.500" fill="#000"/><rect x="64" y="58" width="6.500" height="6.500" fill="#0000ff"/><path d="M54 73.5 H61" stroke="#808080" stroke-dasharray="1 1"/><rect x="45.5" y="69.5" width="8" height="8" fill="#fff" stroke="#808080"/><path d="M47.5 73.5 H52.5" stroke="#000"/><path d="M49.5 71.5 V76.5" stroke="#000"/><rect x="66.5" y="68" width="1.500" height="7" fill="#808080"/><rect x="65.5" y="66" width="3.500" height="3.500" fill="#000"/><rect x="64" y="74" width="6.500" height="6.500" fill="#0000ff"/><path d="M54 89.5 H61" stroke="#808080" stroke-dasharray="1 1"/><rect x="45.5" y="85.5" width="8" height="8" fill="#fff" stroke="#808080"/><path d="M47.5 89.5 H52.5" stroke="#000"/><path d="M49.5 87.5 V92.5" stroke="#000"/><rect x="66.5" y="84" width="1.500" height="7" fill="#808080"/><rect x="65.5" y="82" width="3.500" height="3.500" fill="#000"/><rect x="64" y="90" width="6.500" height="6.500" fill="#0000ff"/><path d="M50 105.5 H61" stroke="#808080" stroke-dasharray="1 1"/><rect x="66.5" y="100" width="1.500" height="7" fill="#808080"/><rect x="65.5" y="98" width="3.500" height="3.500" fill="#000"/><rect x="64" y="106" width="6.500" height="6.500" fill="#0000ff"/><path d="M50 121.5 H61" stroke="#808080" stroke-dasharray="1 1"/><rect x="66.5" y="116" width="1.500" height="7" fill="#808080"/><rect x="65.5" y="114" width="3.500" height="3.500" fill="#000"/><rect x="64" y="122" width="6.500" height="6.500" fill="#0000ff"/><path d="M50 137.5 H61" stroke="#808080" stroke-dasharray="1 1"/><rect x="66.5" y="132" width="1.500" height="7" fill="#808080"/><rect x="65.5" y="130" width="3.500" height="3.500" fill="#000"/><rect x="64" y="138" width="6.500" height="6.500" fill="#0000ff"/><path d="M50 153.5 H61" stroke="#808080" stroke-dasharray="1 1"/><rect x="66.5" y="148" width="1.500" height="7" fill="#808080"/><rect x="65.5" y="146" width="3.500" height="3.500" fill="#000"/><rect x="64" y="154" width="6.500" height="6.500" fill="#0000ff"/><path d="M50 169.5 H61" stroke="#808080" stroke-dasharray="1 1"/><rect x="66.5" y="164" width="1.500" height="7" fill="#808080"/><rect x="65.5" y="162" width="3.500" height="3.500" fill="#000"/><rect x="64" y="170" width="6.500" height="6.500" fill="#0000ff"/><path d="M50 185.5 H61" stroke="#808080" stroke-dasharray="1 1"/><rect x="66.5" y="180" width="1.500" height="7" fill="#808080"/><rect x="65.5" y="178" width="3.500" height="3.500" fill="#000"/><rect x="64" y="186" width="6.500" height="6.500" fill="#0000ff"/><path d="M50 201.5 H61" stroke="#808080" stroke-dasharray="1 1"/><rect x="66.5" y="196" width="1.500" height="7" fill="#808080"/><rect x="65.5" y="194" width="3.500" height="3.500" fill="#000"/><rect x="64" y="202" width="6.500" height="6.500" fill="#0000ff"/><rect x="65.5" y="208.5" width="3.500" height="2.500" fill="#000"/></svg>
<div class="t" style="left:617px;top:140.19px;font-size:11px;line-height:14px;transform:scaleX(0.8922);transform-origin:0 0;">result</div>
<div class="t" style="left:637px;top:156.19px;font-size:11px;line-height:14px;transform:scaleX(0.9517);transform-origin:0 0;">video_template</div>
<div class="t" style="left:673px;top:172.19px;font-size:11px;line-height:14px;transform:scaleX(0.8763);transform-origin:0 0;">title</div>
<div class="t" style="left:657px;top:188.19px;font-size:11px;line-height:14px;transform:scaleX(0.9597);transform-origin:0 0;">genre</div>
<div class="t" style="left:657px;top:204.19px;font-size:11px;line-height:14px;transform:scaleX(0.9449);transform-origin:0 0;">rating</div>
<div class="t" style="left:657px;top:220.19px;font-size:11px;line-height:14px;transform:scaleX(0.9449);transform-origin:0 0;">user_rating</div>
<div class="t" style="left:657px;top:236.19px;font-size:11px;line-height:14px;transform:scaleX(0.9066);transform-origin:0 0;">summary</div>
<div class="t" style="left:657px;top:252.19px;font-size:11px;line-height:14px;transform:scaleX(0.9120);transform-origin:0 0;">details</div>
<div class="t" style="left:657px;top:268.19px;font-size:11px;line-height:14px;transform:scaleX(0.9346);transform-origin:0 0;">year</div>
<div class="t" style="left:657px;top:284.19px;font-size:11px;line-height:14px;transform:scaleX(0.9542);transform-origin:0 0;">director</div>
<div class="t" style="left:657px;top:300.19px;font-size:11px;line-height:14px;transform:scaleX(0.9539);transform-origin:0 0;">studio</div>
<div class="t" style="left:657px;top:316.19px;font-size:11px;line-height:14px;transform:scaleX(0.9269);transform-origin:0 0;">runtime</div>
<div class="t" style="left:657px;top:332.19px;font-size:11px;line-height:14px;transform:scaleX(0.9931);transform-origin:0 0;">vhs</div>
<div class="tr" style="left:744px;top:139px;width:16px;height:211px;"></div>
<div class="bt" style="left:744px;top:139px;width:16px;height:16px;"><svg width="13" height="13" viewBox="0 0 13 13" style="left:0;top:0px"><path d="M3 8.5 L6.5 4.5 L10 8.5 Z" fill="#000"/></svg></div>
<div class="bt" style="left:744px;top:334px;width:16px;height:16px;"><svg width="13" height="13" viewBox="0 0 13 13" style="left:0;top:0px"><path d="M3 5 L10 5 L6.5 8.5 Z" fill="#000"/></svg></div>
<div class="bt" style="left:744px;top:155px;width:16px;height:105px;"></div>
<div style="left:5px;top:349px;width:755px;height:2px;background:linear-gradient(#555,#000)"></div>
<svg style="left:5px;top:350px;" width="290" height="17" viewBox="0 0 290 17"><path d="M0.500 0 L6 15 H79 L83 0 Z" fill="#fff"/><path d="M0.500 0.500 L6 15 M79 15 L83 0.500" fill="none" stroke="#000" stroke-width="1.100"/><path d="M81.800 2 L85 14.700 H128.300 L131.800 0.500" fill="none" stroke="#000" stroke-width="1.100"/><path d="M130.500 2 L135.500 14.700 H209 L212.800 0.500" fill="none" stroke="#000" stroke-width="1.100"/><path d="M211.500 2 L216 14.700 H278.500 L282.500 0.500" fill="none" stroke="#000" stroke-width="1.100"/></svg>
<div style="left:5px;top:386px;width:755px;height:1px;background:#a8a49c;"></div>
<div class="t" style="left:14px;top:350.67px;font-size:12.5px;line-height:16px;transform:scaleX(0.8744);transform-origin:0 0;">XSLT Source</div>
<div class="t" style="left:94px;top:350.67px;font-size:12.5px;line-height:16px;transform:scaleX(0.8258);transform-origin:0 0;">Mapper</div>
<div class="t" style="left:145px;top:350.67px;font-size:12.5px;line-height:16px;transform:scaleX(0.8354);transform-origin:0 0;">Params/Other</div>
<div class="t" style="left:226px;top:350.67px;font-size:12.5px;line-height:16px;transform:scaleX(0.8414);transform-origin:0 0;">WYSIWYG</div>
<div class="sk" style="left:5px;top:368px;width:620px;height:18px;background:#fff;"></div>
<div class="t" style="left:9px;top:368.67px;font-size:12.5px;line-height:16px;color:#0a246a;transform:scaleX(0.8300);transform-origin:0 0;">Processing complete  (150 ms)</div>
<div class="sk" style="left:626px;top:368px;width:46px;height:16px;"></div>
<div class="sk" style="left:674px;top:368px;width:86px;height:16px;"></div>
<div style="left:5px;top:391px;width:1px;height:292px;background:#fff;"></div>
<div style="left:30px;top:413px;width:1px;height:269px;background:#f0efe8;"></div>
<div class="rs" style="left:5px;top:391px;width:755px;height:22px;"></div>
<div class="t" style="left:9.5px;top:394.17px;font-size:12.5px;line-height:16px;transform:scaleX(0.8435);transform-origin:0 0;">Preview</div>
<svg style="left:746px;top:398px;" width="10" height="9" viewBox="0 0 10 9"><path d="M1 1 L8 8 M8 1 L1 8" stroke="#000" stroke-width="1.700"/></svg>
<svg style="left:11px;top:416px;" width="14" height="14" viewBox="0 0 14 14"><path d="M1.500 1.500 L12.500 7 L1.500 12.500 Z" fill="#209050" stroke="#102080" stroke-width="1.500" stroke-linejoin="round"/></svg>
<div style="left:8px;top:436px;width:20px;height:1px;background:#808080;"></div>
<div style="left:8px;top:437px;width:20px;height:1px;background:#fff;"></div>
<svg style="left:10px;top:444px;" width="16" height="13" viewBox="0 0 16 13"><path d="M5 3 H12 M8.500 3 V10.500 H11.500" fill="none" stroke="#404040" stroke-width="1"/><rect x="0" y="0" width="5.500" height="5.500" fill="#0020f0"/><rect x="11.500" y="1" width="4" height="4.500" fill="#a02898"/><rect x="11" y="8" width="4.500" height="4.500" fill="#20d0d0"/></svg>
<div style="left:7px;top:460px;width:22px;height:22px;background:#eceae6;border:1px solid;border-color:#808080 #fff #fff #808080;"></div>
<svg style="left:10px;top:463px;" width="17" height="17" viewBox="0 0 17 17"><path d="M3.500 1.500 H11 L14.500 5 V15.500 H3.500 Z" fill="#fff" stroke="#000"/><text x="3" y="14" font-family="Liberation Sans,sans-serif" font-weight="700" font-style="italic" font-size="14" fill="#1030c0">e</text><path d="M1 11 C4 4 12 3 14 6" fill="none" stroke="#e0a000" stroke-width="1.300"/></svg>
<svg style="left:12px;top:485px;" width="13" height="14" viewBox="0 0 13 14"><path d="M.5 .5 H8 L11.500 4 V13.500 H.5 Z" fill="#fff" stroke="#000"/><path d="M2.500 4.500 H6 M2.500 6.500 H9.500 M2.500 8.500 H9.500 M2.500 10.500 H9.500" stroke="#0000a0"/></svg>
<svg style="left:9px;top:504px;" width="18" height="17" viewBox="0 0 18 17"><rect x="1" y="6" width="15" height="9" fill="#b8b6b0" stroke="#909090"/><circle cx="8.500" cy="10.500" r="3" fill="#d8d6d0" stroke="#909090"/><rect x="5" y="3" width="6" height="3" fill="#b0aea8"/><path d="M1 16 H17" stroke="#fff"/></svg>
<div style="left:8px;top:525px;width:20px;height:1px;background:#808080;"></div>
<div style="left:8px;top:526px;width:20px;height:1px;background:#fff;"></div>
<svg style="left:10px;top:531px;" width="17" height="17" viewBox="0 0 17 17"><rect x=".5" y=".5" width="11" height="10" fill="#fff" stroke="#000"/><path d="M1 3.500 H11 M1 6.500 H11 M4.500 1 V10 M8 1 V10" stroke="#000"/><rect x="6.500" y="7.500" width="9" height="8.500" fill="#808000" stroke="#000"/><rect x="8.500" y="8" width="5" height="3" fill="#e0e0d0"/><rect x="8.500" y="12.500" width="5" height="3.500" fill="#202000"/></svg>
<div style="left:32px;top:412px;width:462px;height:238px;background:#000;"></div>
<svg style="left:195px;top:428px;" width="56" height="100" viewBox="0 0 56 100"><rect width="56" height="100" fill="#fefefe"/><g font-family="Liberation Sans,sans-serif"><rect x="11.8" y="1.6" width="6.1" height="7.4" fill="#38d0d0" transform="rotate(-5 14 5)"/><text x="12.8" y="8.6" font-size="8" fill="#fff" font-weight="700" textLength="4.4" lengthAdjust="spacingAndGlyphs" opacity="1">T</text><text x="18.0" y="7.7" font-size="4.6" fill="#3858c0" font-weight="700" textLength="29.2" lengthAdjust="spacingAndGlyphs" opacity="0.85">HE FUNNIEST HOUR</text><text x="17.0" y="11.7" font-size="4" fill="#3858c0" font-weight="400" textLength="23.3" lengthAdjust="spacingAndGlyphs" opacity="0.8">OF THE YEAR!</text><text x="23.0" y="14.3" font-size="2" fill="#6078c8" font-weight="400" textLength="12.0" lengthAdjust="spacingAndGlyphs" opacity="0.6">Rolling Stone</text><rect x="13.8" y="15.4" width="5.2" height="6.6" fill="#f8e800"/><text x="14.3" y="21.8" font-size="7.6" fill="#3010a0" font-weight="700" textLength="4.4" lengthAdjust="spacingAndGlyphs" opacity="1">T</text><text x="19.0" y="21.2" font-size="4.2" fill="#3858c0" font-weight="700" textLength="27.0" lengthAdjust="spacingAndGlyphs" opacity="0.8">WO THUMBS UP!</text><text x="25.0" y="23.6" font-size="2" fill="#6078c8" font-weight="400" textLength="9.0" lengthAdjust="spacingAndGlyphs" opacity="0.6">Siskel</text><rect x="11.0" y="24.0" width="5.6" height="7.6" fill="#f01858" transform="rotate(-4 14 28)"/><text x="12.0" y="31.2" font-size="7.6" fill="#f8e000" font-weight="700" textLength="4.2" lengthAdjust="spacingAndGlyphs" opacity="1">E</text><text x="17.0" y="31.0" font-size="4.6" fill="#3858c0" font-weight="700" textLength="30.7" lengthAdjust="spacingAndGlyphs" opacity="0.85">NTERTAINING REWARD</text><text x="25.0" y="33.3" font-size="2" fill="#6078c8" font-weight="400" textLength="9.0" lengthAdjust="spacingAndGlyphs" opacity="0.6">Times</text></g><defs><filter id="bl" x="-5%" y="-5%" width="110%" height="110%"><feGaussianBlur stdDeviation=".45"/></filter></defs><g filter="url(#bl)"><path d="M196 480 L199 476 L200 479 L202 475 L203 479 L205 476 L205.500 480 L207 479 L207 486 L203 488 L199 486 L196.500 483 Z" fill="#a8a8a8" opacity="1" transform="translate(-195,-428)"/><path d="M199.500 479 L201 484 M202 478 L203 484 M205 479 L205 484" stroke="#505050" stroke-width=".8" fill="none" transform="translate(-195,-428)"/><path d="M208 475 Q211 470.500 215 474 L216 480 L217 489 L216 500 L209 500 L207 488 L208 481 Z" fill="#303030" opacity="1" transform="translate(-195,-428)"/><path d="M209.500 475.500 h4 v4 h-4 Z" fill="#909090" opacity="1" transform="translate(-195,-428)"/><path d="M216 473 L220 471 L224 471 L229 474 L230 484 L229 492 L216 492 L215 483 Z" fill="#101010" opacity="1" transform="translate(-195,-428)"/><path d="M218.500 466 Q221.500 463.500 224.500 466 L224.500 471 L221.500 473 L218.500 471 Z" fill="#787878" opacity="1" transform="translate(-195,-428)"/><path d="M219 467.500 h5 v3 h-5 Z" fill="#c8c8c8" opacity="1" transform="translate(-195,-428)"/><path d="M218 490 L229 490 L230 501 L217 501 Z" fill="#606060" opacity="1" transform="translate(-195,-428)"/><path d="M221 474 L222.500 474 L223 492 L220.500 492 Z" fill="#d0d0d0" opacity="1" transform="translate(-195,-428)"/><path d="M206 482 L240 481 L241 487 L207 488 Z" fill="#b0b0b0" opacity="0.9" transform="translate(-195,-428)"/><path d="M210 483 h3 v4 h-3 Z M216 483.500 h2 v3 h-2 Z M224 483 h3 v3.500 h-3 Z M233 482.500 h2 v4 h-2 Z" fill="#484848" opacity="1" transform="translate(-195,-428)"/><path d="M229 472 Q232.500 468.500 236 472 L236.500 478 L238 484 L238 498 L230 500 L229 488 Z" fill="#686868" opacity="1" transform="translate(-195,-428)"/><path d="M230 473 h5.500 v4.500 h-5.500 Z" fill="#d0d0d0" opacity="1" transform="translate(-195,-428)"/><path d="M229.500 470.500 h6.500 v2.500 h-6.500 Z" fill="#202020" opacity="1" transform="translate(-195,-428)"/><path d="M241 477 L244 473 L249 474 L250.500 480 L250 489 L246 495 L240 499 L238 497 L241 488 Z" fill="#181818" opacity="1" transform="translate(-195,-428)"/><path d="M242 478 h4 v4 h-4 Z" fill="#808080" opacity="1" transform="translate(-195,-428)"/><path d="M207 492 L217 492 L218 500 L208 500 Z" fill="#505050" opacity="1" transform="translate(-195,-428)"/><path d="M230 492 L240 490 L238 500 L231 501 Z" fill="#404040" opacity="1" transform="translate(-195,-428)"/></g><g font-family="Liberation Sans,sans-serif"><rect x="4.0" y="75.4" width="6.3" height="15.3" fill="#38c8c8"/><rect x="10.3" y="73.3" width="9.2" height="15.7" fill="#f02828"/><rect x="19.5" y="76.0" width="6.5" height="14.0" fill="#28b860"/><rect x="26.0" y="71.3" width="9.8" height="17.3" fill="#5018a0"/><rect x="36.0" y="77.0" width="9.0" height="10.6" fill="#30c8d8"/><rect x="45.0" y="76.0" width="6.6" height="12.6" fill="#f02828"/><text x="4.6" y="88.5" font-size="13" fill="#e8fff0" font-weight="700" textLength="5.2" lengthAdjust="spacingAndGlyphs" opacity="1">C</text><text x="11.5" y="87.5" font-size="15" fill="#fff" font-weight="700" textLength="7.3" lengthAdjust="spacingAndGlyphs" opacity="1">L</text><text x="20.2" y="88.5" font-size="13" fill="#e0ffe8" font-weight="700" textLength="5.2" lengthAdjust="spacingAndGlyphs" opacity="1">E</text><text x="27.0" y="87.5" font-size="16" fill="#f8f000" font-weight="700" textLength="8.6" lengthAdjust="spacingAndGlyphs" opacity="1">R</text><text x="36.5" y="86.8" font-size="10.5" fill="#2040c0" font-weight="700" textLength="8.0" lengthAdjust="spacingAndGlyphs" opacity="1">K</text><text x="45.6" y="87.3" font-size="12.5" fill="#fff" font-weight="700" textLength="5.4" lengthAdjust="spacingAndGlyphs" opacity="1">S</text><text x="14.0" y="94.6" font-size="2.4" fill="#4060c8" font-weight="400" textLength="28.4" lengthAdjust="spacingAndGlyphs" opacity="0.75">A KEVIN SMITH FILM IN COLOR</text><text x="16.0" y="97.4" font-size="2.4" fill="#4060c8" font-weight="400" textLength="25.0" lengthAdjust="spacingAndGlyphs" opacity="0.75">MIRAMAX HOME VIDEO</text></g></svg>
<div class="t" style="left:298.2px;top:426.80px;font-size:13px;line-height:17px;color:#fff;transform:scaleX(0.9970);transform-origin:0 0;-webkit-text-stroke:.22px #fff;">Spend a day at</div>
<div class="t" style="left:298.2px;top:441.67px;font-size:13px;line-height:17px;color:#fff;transform:scaleX(0.9972);transform-origin:0 0;-webkit-text-stroke:.22px #fff;">work with two</div>
<div class="t" style="left:298.2px;top:456.54px;font-size:13px;line-height:17px;color:#fff;transform:scaleX(0.9987);transform-origin:0 0;-webkit-text-stroke:.22px #fff;">friends and their</div>
<div class="t" style="left:298.2px;top:471.41px;font-size:13px;line-height:17px;color:#fff;letter-spacing:0.050px;-webkit-text-stroke:.22px #fff;">quirky customers</div>
<div class="t" style="left:298.2px;top:486.28px;font-size:13px;line-height:17px;color:#fff;letter-spacing:0.009px;-webkit-text-stroke:.22px #fff;">at a video shop</div>
<div class="t" style="left:298.2px;top:501.15px;font-size:13px;line-height:17px;color:#fff;transform:scaleX(0.9898);transform-origin:0 0;-webkit-text-stroke:.22px #fff;">and convenience</div>
<div class="t" style="left:298.2px;top:516.02px;font-size:13px;line-height:17px;color:#fff;transform:scaleX(0.9535);transform-origin:0 0;-webkit-text-stroke:.22px #fff;">store.</div>
<div class="t" style="left:416px;top:425.00px;font-size:13px;line-height:17px;color:#fff;transform:scaleX(0.9886);transform-origin:0 0;-webkit-text-stroke:.22px #fff;">comedy</div>
<svg style="left:476px;top:428px;" width="18" height="16" viewBox="0 0 18 16"><path d="M3 5.500 L17 1.200 L16 10.500 L1.500 15 Z" fill="#000" stroke="#f4f4f4" stroke-width="1.600"/><ellipse cx="8" cy="8.600" rx="3" ry="2" transform="rotate(-18 8 8.600)" fill="#000" stroke="#f4f4f4" stroke-width="1.700"/><path d="M13.400 4.300 L12.800 10" stroke="#f4f4f4" stroke-width="1.500"/></svg>
<div class="t" style="left:195.5px;top:537.61px;font-size:9.5px;line-height:12px;color:#fff;letter-spacing:0.264px;-webkit-text-stroke:.15px #fff;">Director: Kevin Smith</div>
<div class="t" style="left:195.5px;top:549.61px;font-size:9.5px;line-height:12px;color:#fff;letter-spacing:0.480px;-webkit-text-stroke:.15px #fff;">Studio: Buena vista</div>
<div class="t" style="left:195.5px;top:561.61px;font-size:9.5px;line-height:12px;color:#fff;letter-spacing:0.543px;-webkit-text-stroke:.15px #fff;">Year: 1999</div>
<div class="t" style="left:195.5px;top:573.61px;font-size:9.5px;line-height:12px;color:#fff;letter-spacing:0.354px;-webkit-text-stroke:.15px #fff;">Running Time:</div>
<div class="t" style="left:195.5px;top:585.61px;font-size:9.5px;line-height:12px;color:#fff;letter-spacing:0.114px;-webkit-text-stroke:.15px #fff;">97 Minutes</div>
<div style="left:195px;top:641px;width:55px;height:9px;background:#d05030;background:linear-gradient(90deg,#d05c38,#eea074 50%,#cc5430);overflow:hidden;"><div class="t" style="left:3px;top:1px;font-size:7px;line-height:8px;color:#fff;opacity:.85;font-weight:700;letter-spacing:-.3px;transform:scaleX(.62);transform-origin:0 0">FLAMINGOS FIGHT AND FIGHT</div></div>
<div style="left:290px;top:636px;width:204px;height:14px;overflow:hidden;"><div class="t" style="left:12px;top:4px;font-size:13px;line-height:16px;color:#fff;-webkit-text-stroke:.35px #fff;letter-spacing:.4px">A classy</div><div class="t" style="left:126px;top:2px;font-size:13px;line-height:16px;color:#fff;-webkit-text-stroke:.35px #fff;letter-spacing:.3px">comedy</div><div class="t" style="left:187px;top:6px;width:18px;height:9px;background:#e0e0e0"></div><div class="t" style="left:189px;top:4px;font-size:12px;line-height:16px;color:#000;font-weight:700;text-shadow:0 0 1px #fff">vu</div></div>
<svg style="left:366px;top:520px;" width="12" height="21" viewBox="0 0 12 21"><path d="M1 1 V16 L4.500 12.500 L7.500 19.500 L10 18.500 L7 11.500 H11.500 Z" fill="#fff" stroke="#000" stroke-width="1"/></svg>
<div class="tr" style="left:494px;top:412px;width:16px;height:238px;"></div>
<div class="bt" style="left:494px;top:412px;width:16px;height:16px;"><svg width="13" height="13" viewBox="0 0 13 13" style="left:0;top:0px"><path d="M3 8.5 L6.5 4.5 L10 8.5 Z" fill="#000"/></svg></div>
<div class="bt" style="left:494px;top:634px;width:16px;height:16px;"><svg width="13" height="13" viewBox="0 0 13 13" style="left:0;top:0px"><path d="M3 5 L10 5 L6.5 8.5 Z" fill="#000"/></svg></div>
<div class="bt" style="left:494px;top:461px;width:16px;height:10px;"></div>
<div class="tr" style="left:32px;top:650px;width:462px;height:15px;"></div>
<div class="bt" style="left:32px;top:650px;width:16px;height:15px;"><svg width="13" height="13" viewBox="0 0 13 13" style="left:0;top:-1px"><path d="M8 3 L8 10 L4.5 6.5 Z" fill="#000"/></svg></div>
<div class="bt" style="left:478px;top:650px;width:16px;height:15px;"><svg width="13" height="13" viewBox="0 0 13 13" style="left:0;top:-1px"><path d="M5 3 L5 10 L8.5 6.5 Z" fill="#000"/></svg></div>
<div class="bt" style="left:48px;top:650px;width:319px;height:15px;"></div>
<div style="left:494px;top:650px;width:16px;height:15px;background:#d4d0c8;"></div>
<div style="left:32px;top:665px;width:728px;height:2px;background:#000;"></div>
<svg style="left:511px;top:651px;" width="7" height="12" viewBox="0 0 7 12"><path d="M1 1 L5.500 6 L1 11 Z" fill="#fff" stroke="#000" stroke-width=".9"/></svg>
<div style="left:517px;top:412px;width:243px;height:254px;background:#fff;border-left:1px solid #404040;border-top:1px solid #808080;"></div>
<div class="rs" style="left:518px;top:414px;width:242px;height:17px;background:#d4d0c8;"></div>
<div class="t" style="left:523px;top:414.67px;font-size:12.5px;line-height:16px;transform:scaleX(0.8461);transform-origin:0 0;">Back-map Stack</div>
<div style="left:519px;top:432px;width:241px;height:13px;background:#c6c6c6;"></div>
<div style="left:519px;top:432px;width:241px;height:26px;overflow:hidden;"><div class="t" style="left:5.200px;top:-0.5px;font-size:12.500px;line-height:15px;transform:scaleX(0.8632);transform-origin:0 0">xsl:template match=&quot;video&quot;... in sampleVideo.xsl (line 12)</div><div class="t" style="left:5.200px;top:12.5px;font-size:12.500px;line-height:15px;transform:scaleX(0.8726);transform-origin:0 0">xsl:template match=&quot;/&quot;... in sampleVideo.xsl (line ...</div></div>
<div class="tr" style="left:519px;top:650px;width:241px;height:15px;"></div>
<div class="bt" style="left:519px;top:650px;width:16px;height:15px;"><svg width="13" height="13" viewBox="0 0 13 13" style="left:0;top:-1px"><path d="M8 3 L8 10 L4.5 6.5 Z" fill="#000"/></svg></div>
<div class="bt" style="left:744px;top:650px;width:16px;height:15px;"><svg width="13" height="13" viewBox="0 0 13 13" style="left:0;top:-1px"><path d="M5 3 L5 10 L8.5 6.5 Z" fill="#000"/></svg></div>
<div class="bt" style="left:535px;top:650px;width:177px;height:15px;"></div>
<div class="bt" style="left:32px;top:667px;width:15px;height:15px;"><svg width="13" height="13" viewBox="0 0 13 13" style="left:0;top:0"><path d="M8 2.500 V10.500 L4 6.500 Z" fill="#808080"/></svg></div>
<div class="bt" style="left:49px;top:667px;width:15px;height:15px;"><svg width="13" height="13" viewBox="0 0 13 13" style="left:0;top:0"><path d="M5 2.500 V10.500 L9 6.500 Z" fill="#808080"/></svg></div>
<svg style="left:64px;top:666px;" width="190" height="17" viewBox="0 0 190 17"><path d="M2 0 L8 15.500 H179 L185 0 Z" fill="#fff"/><path d="M2 0 L8 15.500 H179 L185 0" fill="none" stroke="#000"/></svg>
<div class="t" style="left:75px;top:666.67px;font-size:12.5px;line-height:16px;transform:scaleX(0.8410);transform-origin:0 0;">Video Scenario 1 [sampleVideo.xsl]</div>
<div style="left:5px;top:682px;width:755px;height:1px;background:#fff;"></div>
<div class="sk" style="left:522px;top:686px;width:65px;height:16px;"></div>
<div class="sk" style="left:589px;top:686px;width:25px;height:16px;"></div>
<div class="sk" style="left:617px;top:686px;width:27px;height:16px;"></div>
<div class="sk" style="left:646px;top:686px;width:31px;height:16px;"></div>
<div class="sk" style="left:680px;top:686px;width:26px;height:16px;"></div>
<div class="sk" style="left:709px;top:686px;width:32px;height:16px;"></div>
<div class="t" style="left:524px;top:686.19px;font-size:11px;line-height:14px;transform:scaleX(0.9137);transform-origin:0 0;">Ln 127 Col 1</div>
<div class="t" style="left:620px;top:686.19px;font-size:11px;line-height:14px;transform:scaleX(0.8383);transform-origin:0 0;">NUM</div>
<svg style="left:745px;top:688px;" width="14" height="14" viewBox="0 0 14 14"><path d="M13 1 L1 13 M13 5 L5 13 M13 9 L9 13" stroke="#808080" stroke-width="1.6"/><path d="M13 0 L0 13 M13 4 L4 13 M13 8 L8 13" stroke="#fff" stroke-width="1"/></svg>
</div>
</body></html>
